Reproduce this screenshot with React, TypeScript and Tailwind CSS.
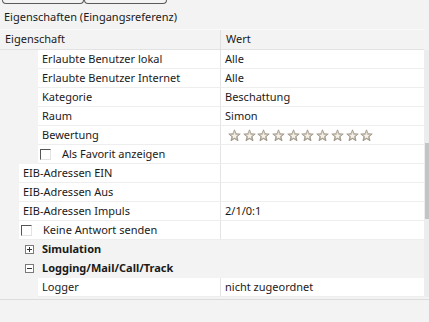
import React from "react";

type Row =
  | { kind: "prop"; indent: number; name: string; value?: string; stars?: boolean }
  | { kind: "check"; indent: number; name: string }
  | { kind: "cat"; name: string; open: boolean };

const rows: Row[] = [
  { kind: "prop", indent: 38, name: "Erlaubte Benutzer lokal", value: "Alle" },
  { kind: "prop", indent: 38, name: "Erlaubte Benutzer Internet", value: "Alle" },
  { kind: "prop", indent: 38, name: "Kategorie", value: "Beschattung" },
  { kind: "prop", indent: 38, name: "Raum", value: "Simon" },
  { kind: "prop", indent: 38, name: "Bewertung", stars: true },
  { kind: "check", indent: 38, name: "Als Favorit anzeigen" },
  { kind: "prop", indent: 19, name: "EIB-Adressen EIN" },
  { kind: "prop", indent: 19, name: "EIB-Adressen Aus" },
  { kind: "prop", indent: 19, name: "EIB-Adressen Impuls", value: "2/1/0:1" },
  { kind: "check", indent: 19, name: "Keine Antwort senden" },
  { kind: "cat", name: "Simulation", open: false },
  { kind: "cat", name: "Logging/Mail/Call/Track", open: true },
  { kind: "prop", indent: 38, name: "Logger", value: "nicht zugeordnet" },
];

function Star() {
  return (
    <svg width="13" height="13" viewBox="0 0 24 24">
      <defs>
        <linearGradient id="sg" x1="0" y1="0" x2="0" y2="1">
          <stop offset="0" stopColor="#e6e0d4" />
          <stop offset="1" stopColor="#a69d8c" />
        </linearGradient>
      </defs>
      <polygon
        points="12,1.5 15,8.6 22.6,9.2 16.8,14.2 18.6,21.8 12,17.8 5.4,21.8 7.2,14.2 1.4,9.2 9,8.6"
        fill="url(#sg)"
        stroke="#8c8474"
        strokeWidth="1.2"
        strokeLinejoin="round"
      />
      <polygon points="12,7 13.6,11 17.6,11.3 14.6,13.9 15.5,17.8 12,15.7 8.5,17.8 9.4,13.9 6.4,11.3 10.4,11" fill="#f4f1ea" />
    </svg>
  );
}

function Checkbox() {
  return <div className="w-[11px] h-[11px] border-t border-l border-[#555] border-b border-r border-b-[#e3e3e3] border-r-[#e3e3e3] bg-white" />;
}

function Expander({ open }: { open: boolean }) {
  return (
    <div className="relative w-[9px] h-[9px] border border-[#7a7a7a] bg-white">
      <div className="absolute left-[1px] top-[3px] w-[5px] h-px bg-[#333]" />
      {!open && <div className="absolute left-[3px] top-[1px] w-px h-[5px] bg-[#333]" />}
    </div>
  );
}

export default function App() {
  return (
    <div className="w-[429px] h-[322px] bg-[#f3f3f3] text-[11px] text-[#1a1a1a] overflow-hidden" style={{ fontFamily: '"Noto Sans", "Open Sans", sans-serif' }}>
      <div className="flex h-[6px] pl-[2px]">
        <div className="w-[82px] h-[4px] border-b border-x border-[#5a5a5a] rounded-b-[4px]" />
        <div className="w-[83px] h-[4px] border-b border-x border-[#5a5a5a] rounded-b-[4px]" />
      </div>
      <div className="h-[23px] pl-[4px] flex items-center">Eigenschaften (Eingangsreferenz)</div>
      <div className="flex">
        <div className="w-[424px]">
          <div className="flex h-[21px] border-t border-[#fafafa] border-b border-b-[#e2e2e2] bg-[#f3f3f3]">
            <div className="w-[221px] pl-[5px] flex items-center border-r border-[#e0e0e0]">Eigenschaft</div>
            <div className="flex-1 pl-[5px] flex items-center">Wert</div>
          </div>
          {rows.map((r, i) => {
            if (r.kind === "cat") {
              return (
                <div key={i} className="flex items-center h-[19px] bg-[#f3f3f3] font-bold">
                  <div className="w-[25px]" />
                  <Expander open={r.open} />
                  <div className="pl-[8px]">{r.name}</div>
                </div>
              );
            }
            return (
              <div key={i} className="flex h-[19px]">
                <div className="flex w-[221px]">
                  <div className="shrink-0 bg-[#f3f3f3]" style={{ width: r.indent }} />
                  <div className="flex-1 flex items-center bg-white border-b border-[#eeeeee] border-r border-r-[#e4e4e4]">
                    {r.kind === "check" ? (
                      <>
                        <div className="pl-[2px]"><Checkbox /></div>
                        <div className="pl-[11px]">{r.name}</div>
                      </>
                    ) : (
                      <div className="pl-[4px]">{r.name}</div>
                    )}
                  </div>
                </div>
                <div className="flex-1 flex items-center bg-white border-b border-[#eeeeee] pl-[4px]">
                  {r.kind === "prop" && r.stars ? (
                    <div className="flex gap-[1.7px] pl-[3px]">
                      {Array.from({ length: 10 }).map((_, k) => (
                        <Star key={k} />
                      ))}
                    </div>
                  ) : r.kind === "prop" ? (
                    r.value
                  ) : null}
                </div>
              </div>
            );
          })}
        </div>
        <div className="w-[5px] flex flex-col pt-[21px]">
          <div className="flex-1 bg-[#ededed] pt-[93px]">
            <div className="ml-[1px] w-[4px] h-[76px] bg-[#c4c4c4]" />
          </div>
        </div>
      </div>
      <div className="mt-[2px] h-px bg-[#dcdcdc]" />
    </div>
  );
}
